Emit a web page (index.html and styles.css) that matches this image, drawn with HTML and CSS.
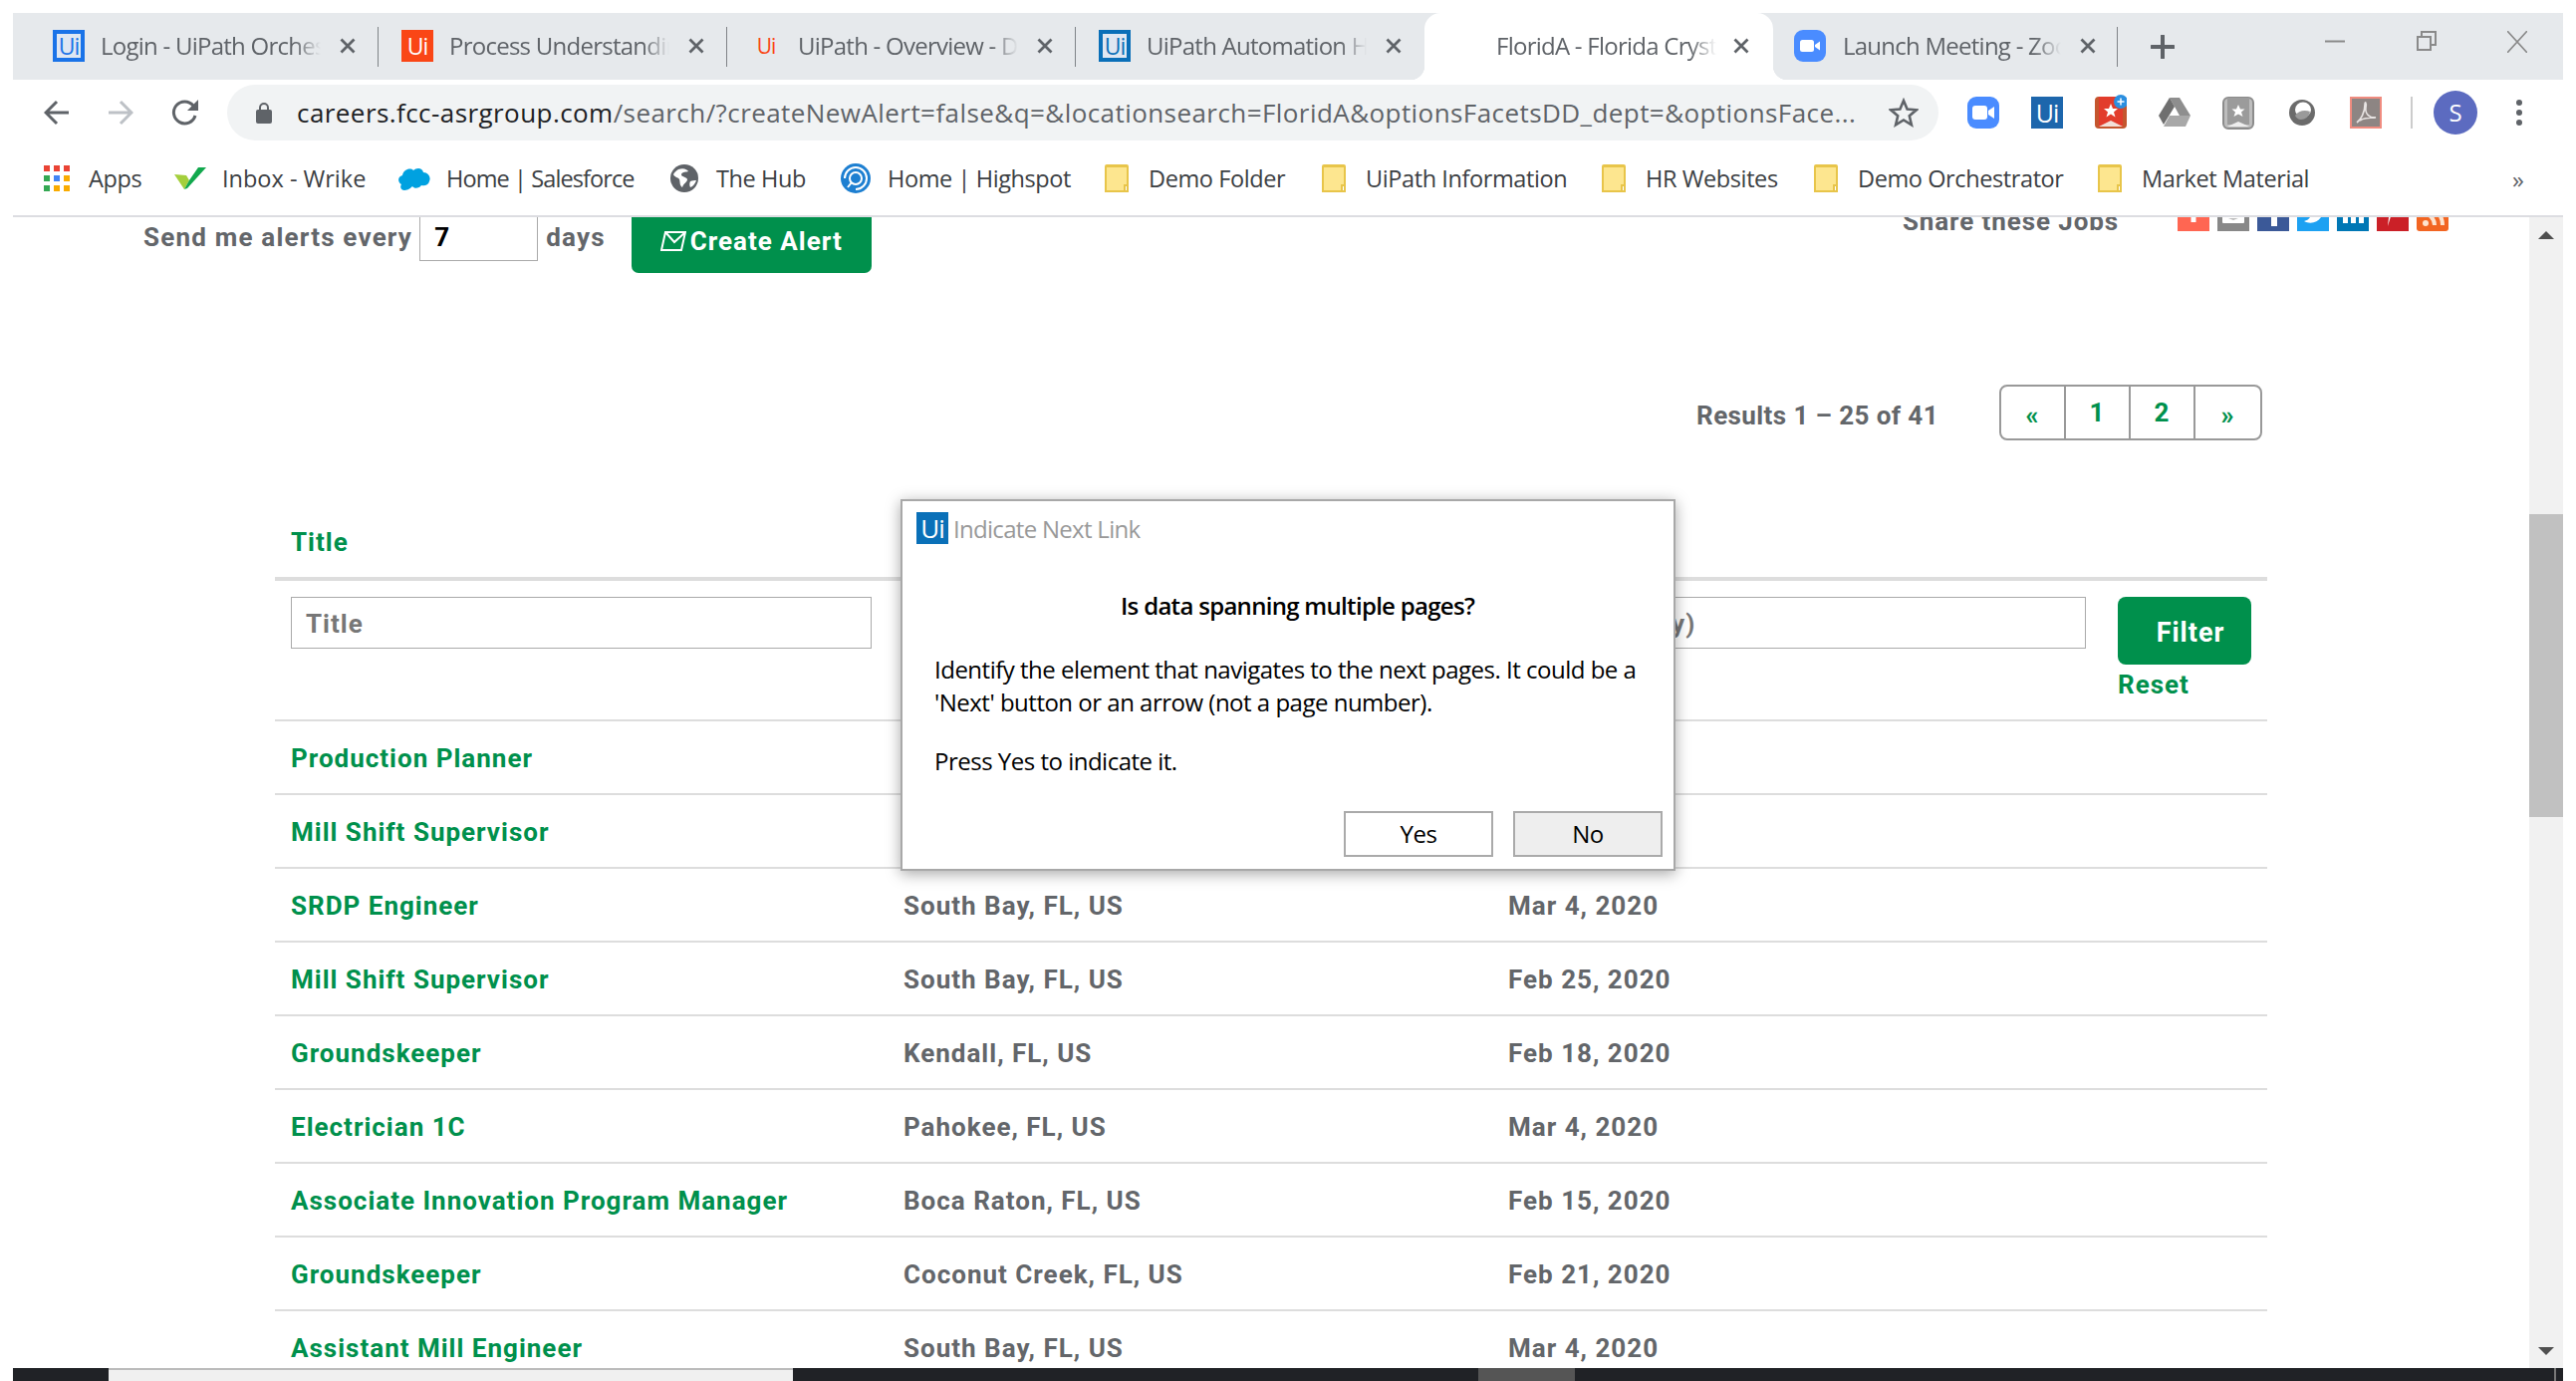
FILE: index.html
```html
<!DOCTYPE html>
<html lang="en">
  <head>
    <meta charset="UTF-8" />
    <title>FloridA - Florida Crystals</title>
    <link rel="stylesheet" href="styles.css">
  </head>
  <body>
    <div class="browser">
      <!-- Tab strip -->
      <div class="tabstrip">
        <div class="tab">
          <span class="fav fav-outline">Ui</span>
          <span class="tab-title">Login - UiPath Orchestrator</span>
          <svg class="tab-close" viewBox="0 0 16 16" width="16" height="16"><path d="M1.500 1.500l13 13M14.500 1.500l-13 13" stroke="#5f6368" stroke-width="2.800"/></svg>
        </div>
        <div class="tab">
          <span class="fav fav-orange">Ui</span>
          <span class="tab-title">Process Understanding</span>
          <svg class="tab-close" viewBox="0 0 16 16" width="16" height="16"><path d="M1.500 1.500l13 13M14.500 1.500l-13 13" stroke="#5f6368" stroke-width="2.800"/></svg>
        </div>
        <div class="tab">
          <span class="fav fav-plain">Ui</span>
          <span class="tab-title">UiPath - Overview - Docs</span>
          <svg class="tab-close" viewBox="0 0 16 16" width="16" height="16"><path d="M1.500 1.500l13 13M14.500 1.500l-13 13" stroke="#5f6368" stroke-width="2.800"/></svg>
        </div>
        <div class="tab tab-before-active">
          <span class="fav fav-outline-dark">Ui</span>
          <span class="tab-title">UiPath Automation Hub</span>
          <svg class="tab-close" viewBox="0 0 16 16" width="16" height="16"><path d="M1.500 1.500l13 13M14.500 1.500l-13 13" stroke="#5f6368" stroke-width="2.800"/></svg>
        </div>
        <div class="tab tab-active">
          <span class="fav fav-none"></span>
          <span class="tab-title">FloridA - Florida Crystals</span>
          <svg class="tab-close" viewBox="0 0 16 16" width="16" height="16"><path d="M1.500 1.500l13 13M14.500 1.500l-13 13" stroke="#5f6368" stroke-width="2.800"/></svg>
        </div>
        <div class="tab tab-last">
          <span class="fav fav-zoom">
            <svg viewBox="0 0 32 32" width="32" height="32"><rect x="6" y="10" width="14" height="12" rx="2.500" fill="#fff"/><path d="M21 15l5-3.500v9L21 17z" fill="#fff"/></svg>
          </span>
          <span class="tab-title">Launch Meeting - Zoom</span>
          <svg class="tab-close" viewBox="0 0 16 16" width="16" height="16"><path d="M1.500 1.500l13 13M14.500 1.500l-13 13" stroke="#5f6368" stroke-width="2.800"/></svg>
        </div>
        <span class="new-tab">
          <svg viewBox="0 0 24 24" width="24" height="24"><path d="M12 1v22M1 12h22" stroke="#5f6368" stroke-width="4" stroke-linecap="round"/></svg>
        </span>
        <div class="win-controls">
          <svg viewBox="0 0 20 22" width="20" height="22"><path d="M0 10.500h20" stroke="#8a8a8a" stroke-width="2"/></svg>
          <svg viewBox="0 0 20 20" width="20" height="20"><path d="M1 6h13v13H1zM5 6V1h14v13h-5" fill="none" stroke="#8a8a8a" stroke-width="2"/></svg>
          <svg viewBox="0 0 20 22" width="20" height="22"><path d="M0 0l20 22M20 0L0 22" stroke="#8a8a8a" stroke-width="1.600"/></svg>
        </div>
      </div>

      <!-- Address row -->
      <div class="toolbar">
        <svg class="nav-icon" viewBox="0 0 26 26" width="26" height="26"><path d="M25 13H3M13 2L2 13l11 11" fill="none" stroke="#5f6368" stroke-width="3"/></svg>
        <svg class="nav-icon" viewBox="0 0 26 26" width="26" height="26"><path d="M1 13h22M13 2l11 11-11 11" fill="none" stroke="#bdc1c6" stroke-width="3"/></svg>
        <svg class="nav-icon" viewBox="0 0 28 28" width="28" height="28"><path d="M24 17a11 11 0 1 1-2-10" fill="none" stroke="#5f6368" stroke-width="3"/><path d="M27 1v11H16z" fill="#5f6368"/></svg>
        <div class="omnibox">
          <svg class="lock" viewBox="0 0 16 22" width="16" height="22"><path d="M4 9V6a4 4 0 0 1 8 0v3" fill="none" stroke="#5f6368" stroke-width="2"/><rect y="8" width="16" height="14" rx="2" fill="#5f6368"/></svg>
          <span class="url"><b>careers.fcc-asrgroup.com</b>/search/?createNewAlert=false&amp;q=&amp;locationsearch=FloridA&amp;optionsFacetsDD_dept=&amp;optionsFace...</span>
          <svg class="star" viewBox="0 0 30 30" width="30" height="30"><path d="M15 3l3.600 8.500 9.200.8-7 6 2.100 9L15 22.500 7.100 27.300l2.100-9-7-6 9.200-.8z" fill="none" stroke="#5f6368" stroke-width="2.600"/></svg>
        </div>
        <div class="extensions">
          <svg viewBox="0 0 32 38" width="32" height="38"><rect y="3" width="32" height="32" rx="9" fill="#4a8cff"/><rect x="5" y="12" width="15" height="14" rx="3" fill="#fff"/><path d="M21 17l6-4v12l-6-4z" fill="#fff"/></svg>
          <span class="ext-ui">Ui</span>
          <svg viewBox="0 0 32 38" width="32" height="38"><rect y="3" width="32" height="32" rx="4" fill="#c4562e"/><rect x="4" y="3" width="24" height="30" fill="#e23c2c"/><path d="M4 33l12-6 12 6z" fill="#f3e0d8"/><path d="M16 10l2 5h5l-4 3.500 1.500 5L16 20.500 11.500 23.500l1.500-5-4-3.500h5z" fill="#fff"/><circle cx="26" cy="8" r="7" fill="#2b8fe0"/><path d="M26 4.500v7M22.500 8h7" stroke="#fff" stroke-width="1.500"/></svg>
          <svg viewBox="0 0 32 38" width="32" height="38"><path d="M11 4h10l11 18H21z" fill="#8e8e8e"/><path d="M11 4L0 22l5 9 11-18z" fill="#6f6f6f"/><path d="M5 33h22l5-11H11z" fill="#a8a8a8"/></svg>
          <svg viewBox="0 0 32 38" width="32" height="38"><rect x="1" y="4" width="30" height="31" rx="5" fill="#bdbdbd" stroke="#8c8c8c" stroke-width="2"/><rect x="5" y="4" width="22" height="27" fill="#9b9b9b"/><path d="M5 33l11-5 11 5z" fill="#eee"/><path d="M16 11l2 4.500h4.500L19 18.500l1.500 4.500L16 20.500 11.500 23l1.500-4.500-3.500-3H14z" fill="#fff"/></svg>
          <svg viewBox="0 0 32 38" width="32" height="38"><circle cx="16" cy="19" r="13" fill="#6b6b6b"/><ellipse cx="17" cy="16" rx="8" ry="7.500" fill="#fff"/><path d="M9 22c3-5 10-6 15-4-1 5-5 8-9 8-3 0-5-2-6-4z" fill="#9a9a9a"/></svg>
          <svg viewBox="0 0 32 38" width="32" height="38"><rect x="1" y="4" width="30" height="30" fill="#8d8583" stroke="#f08c80" stroke-width="2"/><path d="M7 29c4-3 8-10 8-18 0-4 2-2 1 3-1 6 4 11 10 10-5 0-12 0-16 3" fill="none" stroke="#e8e4e3" stroke-width="1.600"/></svg>
          <span class="ext-sep"></span>
          <span class="avatar">S</span>
          <span class="menu-dots"><i></i><i></i><i></i></span>
        </div>
      </div>

      <!-- Bookmarks -->
      <div class="bookmarks">
        <div class="bm bm-apps">
          <svg viewBox="0 0 26 26" width="26" height="26"><rect width="6" height="6" fill="#ea4335"/><rect x="10" width="6" height="6" fill="#ea4335"/><rect x="20" width="6" height="6" fill="#ea4335"/><rect y="10" width="6" height="6" fill="#34a853"/><rect x="10" y="10" width="6" height="6" fill="#4285f4"/><rect x="20" y="10" width="6" height="6" fill="#f9ab00"/><rect y="20" width="6" height="6" fill="#34a853"/><rect x="10" y="20" width="6" height="6" fill="#f9ab00"/><rect x="20" y="20" width="6" height="6" fill="#f9ab00"/></svg>
          <span>Apps</span>
        </div>
        <div class="bm bm-wrike">
          <svg viewBox="0 0 32 26" width="32" height="26"><path d="M0 9l12 1 3 5-5 9z" fill="#a4cf3c"/><path d="M15 15l9-13h8L13 23l-3 1z" fill="#11a84d"/></svg>
          <span>Inbox - Wrike</span>
        </div>
        <div class="bm bm-sales">
          <svg viewBox="0 0 33 26" width="33" height="26"><path d="M7 25c-3 0-5-3-3-6-4-2-4-8 1-9 1-6 8-8 11-5 3-3 9-3 10 2 5 0 8 5 6 9-1 4-5 5-8 4-2 3-7 4-9 1-3 3-6 4-8 4z" fill="#00a1e0"/></svg>
          <span>Home | Salesforce</span>
        </div>
        <div class="bm bm-hub">
          <svg viewBox="0 0 28 28" width="28" height="28"><circle cx="14" cy="14" r="14" fill="#5f6368"/><path d="M8 5c5-2 9 0 10 2-2 1-6 0-7 3 0 3 5 2 6 5 0 3-4 4-5 8-3-2-2-5-3-8-1-2-5-2-6-5 1-2 3-4 5-5zM20 17c2-1 4-1 6-1-1 3-3 6-6 7-1-2-1-4 0-6z" fill="#fff"/></svg>
          <span>The Hub</span>
        </div>
        <div class="bm bm-spot">
          <svg viewBox="0 0 30 30" width="30" height="30"><circle cx="15" cy="15" r="15" fill="#1d7fd1"/><path d="M15 26a11 11 0 1 0-11-11" fill="none" stroke="#fff" stroke-width="2"/><circle cx="15" cy="15" r="6" fill="none" stroke="#fff" stroke-width="2"/><path d="M7 24l4-5" stroke="#fff" stroke-width="2"/></svg>
          <span>Home | Highspot</span>
        </div>
        <div class="bm bm-folder bm-f1"><span class="folder"></span><span>Demo Folder</span></div>
        <div class="bm bm-folder bm-f2"><span class="folder"></span><span>UiPath Information</span></div>
        <div class="bm bm-folder bm-f3"><span class="folder"></span><span>HR Websites</span></div>
        <div class="bm bm-folder bm-f4"><span class="folder"></span><span>Demo Orchestrator</span></div>
        <div class="bm bm-folder"><span class="folder"></span><span>Market Material</span></div>
        <span class="bm-more">&raquo;</span>
      </div>

      <!-- Page -->
      <div class="viewport">
        <main class="page">
          <div class="alert-row">
            <div class="alert-form">
              <span class="alert-label">Send me alerts every</span>
              <span class="days-input">7</span>
              <span class="alert-label">days</span>
              <span class="create-alert">
                <svg viewBox="0 0 26 22" width="26" height="22"><path d="M5 2h20l-4 18H1zM5 2l9 10L25 2" fill="none" stroke="#fff" stroke-width="2"/></svg>
                Create Alert
              </span>
            </div>
            <div class="share">
              <span class="share-label">Share these Jobs</span>
              <div class="share-icons">
                <svg viewBox="0 0 32 32" width="32" height="32"><rect width="32" height="32" fill="#ff6652"/><rect x="13.500" width="5" height="23" fill="#fff"/></svg>
                <svg viewBox="0 0 32 32" width="32" height="32"><rect width="32" height="32" fill="#888"/><rect x="5" width="22" height="24" rx="1" fill="#fff"/><path d="M11 19h10l-5 2z" fill="#bbb"/></svg>
                <svg viewBox="0 0 32 32" width="32" height="32"><rect width="32" height="32" fill="#3b5998"/><rect x="14" width="6" height="27" fill="#fff"/></svg>
                <svg viewBox="0 0 32 32" width="32" height="32"><rect width="32" height="32" fill="#1da1f2"/><path d="M7 22c7 4 17 1 19-9l-19 2c3 1 5 2 6 3-1 2-3 3-6 4z" fill="#fff"/></svg>
                <svg viewBox="0 0 32 32" width="32" height="32"><rect width="32" height="32" fill="#0077b5"/><path d="M6 0h5v24H6zM14 0h5v24h-5zM22 0h5v24h-5z" fill="#fff"/></svg>
                <svg viewBox="0 0 32 32" width="32" height="32"><rect width="32" height="32" fill="#cb2027"/><path d="M16 0h8c-1 8-5 15-9 14l-4 13 1-9 3-12z" fill="#fff"/></svg>
                <svg viewBox="0 0 32 32" width="32" height="32"><rect width="32" height="32" rx="3" fill="#f26522"/><circle cx="9" cy="24" r="3" fill="#fde3cf"/><path d="M6 14a12 12 0 0 1 12 12M6 6a20 20 0 0 1 20 20" fill="none" stroke="#fde3cf" stroke-width="4"/></svg>
              </div>
            </div>
          </div>

          <div class="results-row">
            <span class="results-count">Results 1 &ndash; 25 of 41</span>
            <div class="pager">
              <a class="pager-arrow">&laquo;</a>
              <a>1</a>
              <a>2</a>
              <a class="pager-arrow">&raquo;</a>
            </div>
          </div>

          <section class="jobs">
            <div class="jobs-head">Title</div>
            <div class="filters">
              <input class="f-title" placeholder="Title" />
              <input class="f-location" placeholder="Location" />
              <input class="f-date" placeholder="Date (mm/dd/yyyy)" />
              <div class="filter-actions">
                <span class="filter-btn">Filter</span>
                <a class="reset">Reset</a>
              </div>
            </div>
            <div class="job"><a>Production Planner</a><span>South Bay, FL, US</span><span>Mar 4, 2020</span></div>
            <div class="job"><a>Mill Shift Supervisor</a><span>South Bay, FL, US</span><span>Mar 4, 2020</span></div>
            <div class="job"><a>SRDP Engineer</a><span>South Bay, FL, US</span><span>Mar 4, 2020</span></div>
            <div class="job"><a>Mill Shift Supervisor</a><span>South Bay, FL, US</span><span>Feb 25, 2020</span></div>
            <div class="job"><a>Groundskeeper</a><span>Kendall, FL, US</span><span>Feb 18, 2020</span></div>
            <div class="job"><a>Electrician 1C</a><span>Pahokee, FL, US</span><span>Mar 4, 2020</span></div>
            <div class="job"><a>Associate Innovation Program Manager</a><span>Boca Raton, FL, US</span><span>Feb 15, 2020</span></div>
            <div class="job"><a>Groundskeeper</a><span>Coconut Creek, FL, US</span><span>Feb 21, 2020</span></div>
            <div class="job"><a>Assistant Mill Engineer</a><span>South Bay, FL, US</span><span>Mar 4, 2020</span></div>
          </section>
        </main>
        <div class="scrollbar">
          <span class="arrow-up"></span>
          <span class="thumb"></span>
          <span class="arrow-down"></span>
        </div>

        <!-- Indicate Next Link dialog -->
        <div class="dialog">
          <div class="dialog-title">
            <span class="dialog-logo">Ui</span>
            <span>Indicate Next Link</span>
          </div>
          <h2>Is data spanning multiple pages?</h2>
          <p>Identify the element that navigates to the next pages. It could be a<br />'Next' button or an arrow (not a page number).</p>
          <p>Press Yes to indicate it.</p>
          <div class="dialog-buttons">
            <button>Yes</button>
            <button class="btn-no">No</button>
          </div>
        </div>
      </div>

      <!-- Taskbar sliver -->
      <div class="taskbar">
        <span class="task-light"></span>
        <span class="task-mid"></span>
        <span class="task-line"></span>
      </div>
    </div>
  </body>
</html>
```

FILE: styles.css
```css
html,
body {
  margin: 0;
  height: 100%;
  background: #fff;
  overflow: hidden;
}
body {
  font-family: "Open Sans", sans-serif;
}
.browser {
  width: 2560px;
  height: 1386px;
  margin-left: 13px;
  display: flex;
  flex-direction: column;
  box-sizing: border-box;
  padding-top: 13px;
}

/* Tabs */
.tabstrip {
  height: 67px;
  background: #e6e9ec;
  display: flex;
  align-items: stretch;
  padding-left: 17px;
  flex: none;
}
.tab {
  width: 350px;
  box-sizing: border-box;
  display: flex;
  align-items: center;
  padding-left: 23px;
  position: relative;
  padding-bottom: 2px;
}
.tab::after {
  content: "";
  position: absolute;
  right: 0;
  top: 14px;
  height: 40px;
  width: 1px;
  background: #7f8387;
}
.tab-before-active::after {
  display: none;
}
.tab-active {
  background: #fff;
  border-radius: 16px 16px 0 0;
}
.tab-active::before,
.tab-active::after {
  content: "";
  position: absolute;
  top: auto;
  bottom: 0;
  width: 14px;
  height: 14px;
  background: radial-gradient(circle at 0 0, transparent 14px, #fff 14.500px);
}
.tab-active::before {
  left: -14px;
}
.tab-active::after {
  right: -14px;
  background: radial-gradient(circle at 100% 0, transparent 14px, #fff 14.500px);
}
.fav {
  width: 32px;
  height: 32px;
  flex: none;
  box-sizing: border-box;
  display: flex;
  align-items: center;
  justify-content: center;
  font-size: 23px;
  letter-spacing: -1px;
  margin-right: 16px;
}
.fav-outline {
  border: 4px solid #1a73e8;
  background: #dfe7f2;
  color: #1a73e8;
}
.fav-outline-dark {
  border: 4px solid #0a6fb8;
  background: #dfe7f2;
  color: #0a6fb8;
}
.fav-orange {
  background: #fa4616;
  color: #fff;
}
.fav-plain {
  color: #fa4616;
  font-size: 21px;
}
.fav-none {
  margin-right: 17px;
}
.fav-zoom {
  background: #4a8cff;
  border-radius: 9px;
  margin-right: 17px;
}
.tab-last {
  padding-left: 21px;
  width: 346px;
}
.tab-title {
  width: 221px;
  flex: none;
  overflow: hidden;
  white-space: nowrap;
  font-size: 24px;
  letter-spacing: -0.750px;
  color: #5f6368;
  -webkit-mask-image: linear-gradient(to right, #000 88%, transparent 100%);
  mask-image: linear-gradient(to right, #000 88%, transparent 100%);
}
.tab-close {
  flex: none;
  margin-left: 19px;
}
.tab-active .tab-close {
  margin-left: 17px;
}
.tab-last .tab-title {
  width: 219px;
}
.new-tab {
  width: 24px;
  margin-left: 33px;
  display: flex;
  align-items: center;
}
.win-controls {
  margin-left: auto;
  width: 203px;
  margin-right: 36px;
  display: flex;
  justify-content: space-between;
  padding-top: 18px;
  align-items: flex-start;
}

/* Address row */
.toolbar {
  height: 66px;
  display: flex;
  align-items: center;
  flex: none;
  padding-left: 31px;
}
.nav-icon {
  margin-right: 38px;
  flex: none;
}
.nav-icon:nth-child(3) {
  margin-right: 28px;
}
.omnibox {
  width: 1718px;
  height: 56px;
  background: #f1f3f4;
  border-radius: 28px;
  display: flex;
  align-items: center;
  box-sizing: border-box;
  padding-left: 29px;
  flex: none;
}
.lock {
  flex: none;
  margin-right: 25px;
}
.url {
  width: 1566px;
  flex: none;
  white-space: nowrap;
  overflow: hidden;
  font-size: 26px;
  letter-spacing: 0.430px;
  color: #5f6368;
}
.url b {
  font-weight: 400;
  color: #202124;
}
.star {
  flex: none;
  margin-left: 32px;
}
.extensions {
  display: flex;
  align-items: center;
  margin-left: 29px;
}
.extensions svg {
  margin-right: 32px;
  flex: none;
}
.ext-ui {
  width: 32px;
  height: 32px;
  background: #1d66ac;
  color: #fff;
  font-size: 25px;
  line-height: 32px;
  text-align: center;
  margin-right: 32px;
  flex: none;
  letter-spacing: -1px;
}
.ext-sep {
  width: 2px;
  height: 32px;
  background: #ccc;
  margin-left: -3px;
  margin-right: 21px;
}
.avatar {
  width: 44px;
  height: 44px;
  border-radius: 50%;
  background: #5c6bc0;
  color: #fff;
  font-size: 24px;
  line-height: 44px;
  text-align: center;
  flex: none;
}
.menu-dots {
  display: flex;
  flex-direction: column;
  gap: 4px;
  margin-left: 39px;
}
.menu-dots i {
  width: 6px;
  height: 6px;
  border-radius: 50%;
  background: #5f6368;
}

/* Bookmarks */
.bookmarks {
  height: 72px;
  box-sizing: border-box;
  border-bottom: 2px solid #dcdde1;
  display: flex;
  align-items: center;
  padding-left: 31px;
  flex: none;
  padding-bottom: 4px;
}
.bm {
  display: flex;
  align-items: center;
  gap: 16px;
  font-size: 23.500px;
  letter-spacing: -0.400px;
  color: #3c4043;
  white-space: nowrap;
  flex: none;
}
.bm-apps { width: 131px; gap: 19px; }
.bm-wrike { width: 224px; letter-spacing: 0; }
.bm-sales { width: 274px; letter-spacing: -0.900px; }
.bm-hub { width: 171px; gap: 18px; }
.bm-spot { width: 265px; gap: 17px; }
.bm-folder { gap: 20px; }
.bm-f1 { width: 218px; }
.bm-f2 { width: 281px; }
.bm-f3 { width: 213px; }
.bm-f4 { width: 285px; }
.folder {
  width: 24px;
  height: 28px;
  box-sizing: border-box;
  background: #fde68f;
  border: 2px solid #e8c54a;
  border-top-width: 3px;
  border-radius: 2px 2px 0 0;
  position: relative;
}
.folder::after {
  content: "";
  position: absolute;
  right: -2px;
  bottom: -2px;
  width: 5px;
  height: 8px;
  border: 2px solid #e8c54a;
  background: #fff;
  box-sizing: border-box;
}
.bm-more {
  margin-left: auto;
  margin-right: 39px;
  font-size: 24px;
  color: #5f6368;
}

/* Page area */
.viewport {
  flex: 1;
  min-height: 0;
  position: relative;
  display: flex;
  overflow: hidden;
}
.page {
  flex: 1;
  min-width: 0;
  overflow: hidden;
  padding-left: 263px;
  padding-right: 263px;
  font-family: Roboto, sans-serif;
  font-weight: 700;
  font-size: 26px;
  letter-spacing: 1px;
  color: #63666a;
}
.alert-row {
  margin-left: -132px;
  margin-right: -182px;
  margin-top: -19px;
  height: 75px;
  display: flex;
  justify-content: space-between;
}
.alert-form {
  display: flex;
  align-items: flex-start;
}
.alert-label {
  padding-top: 24px;
  letter-spacing: 1.200px;
}
.days-input {
  width: 119px;
  height: 63px;
  margin-left: 7px;
  margin-right: 8px;
  box-sizing: border-box;
  border: 1px solid #aaa;
  color: #000;
  padding: 23px 0 0 14px;
}
.create-alert {
  margin-left: 26px;
  width: 241px;
  height: 75px;
  background: #00904c;
  color: #fff;
  border-radius: 0 0 7px 7px;
  display: flex;
  align-items: center;
  justify-content: center;
  gap: 4px;
  padding-top: 11px;
  box-sizing: border-box;
}
.share {
  display: flex;
  align-items: flex-start;
}
.share-label {
  padding-top: 8px;
  margin-right: 59px;
  letter-spacing: 0.900px;
}
.share-icons {
  display: flex;
  gap: 8px;
  padding-top: 1px;
}

.results-row {
  height: 56px;
  margin-top: 112px;
  margin-right: 5px;
  display: flex;
  justify-content: flex-end;
  align-items: center;
}
.results-count {
  margin-right: 61px;
  padding-top: 6px;
  letter-spacing: 0.400px;
}
.pager {
  display: flex;
  height: 56px;
  box-sizing: border-box;
  border: 2px solid #999;
  border-radius: 8px;
}
.pager a {
  width: 65px;
  box-sizing: border-box;
  border-right: 2px solid #999;
  color: #00904c;
  display: flex;
  align-items: center;
  justify-content: center;
}
.pager a:last-child {
  border-right: 0;
}
.pager-arrow {
  width: 66px;
  padding-top: 6px;
}
.jobs-head {
  height: 82px;
  margin-top: 55px;
  box-sizing: border-box;
  padding: 32px 0 0 16px;
  color: #00904c;
}
.filters {
  height: 145px;
  box-sizing: border-box;
  border-top: 4px solid #ddd;
  border-bottom: 2px solid #ddd;
  display: flex;
  align-items: flex-start;
  padding: 16px 0 0 16px;
}
.filters input {
  height: 52px;
  box-sizing: border-box;
  border: 1px solid #aaa;
  padding: 2px 0 0 14px;
  font: inherit;
  letter-spacing: inherit;
  color: inherit;
  outline: 0;
}
.filters input::placeholder {
  color: #777;
  opacity: 1;
}
.f-title {
  width: 583px;
  margin-right: 31px;
}
.f-location {
  width: 510px;
  margin-right: 19px;
}
.filters .f-date {
  width: 659px;
  margin-right: 32px;
  padding-left: 25px;
}
.filter-actions {
  display: flex;
  flex-direction: column;
}
.filter-btn {
  width: 134px;
  height: 68px;
  background: #00904c;
  color: #fff;
  border-radius: 8px;
  font-size: 27px;
  display: flex;
  align-items: center;
  justify-content: center;
  padding: 4px 0 0 12px;
  box-sizing: border-box;
}
.reset {
  color: #00904c;
  margin-top: 5px;
}
.job {
  height: 74px;
  box-sizing: border-box;
  border-bottom: 2px solid #ddd;
  display: grid;
  grid-template-columns: 615px 607px 1fr;
  padding: 2px 0 0 16px;
  align-items: center;
}
.job a {
  color: #00904c;
}

/* Scrollbar */
.scrollbar {
  width: 34px;
  flex: none;
  background: #f1f1f1;
  position: relative;
}
.arrow-up,
.arrow-down {
  position: absolute;
  left: 9px;
  width: 0;
  height: 0;
  border-left: 8px solid transparent;
  border-right: 8px solid transparent;
}
.arrow-up {
  top: 14px;
  border-bottom: 8px solid #505050;
}
.arrow-down {
  bottom: 13px;
  border-top: 8px solid #505050;
}
.thumb {
  position: absolute;
  left: 0;
  right: 0;
  top: 298px;
  height: 304px;
  background: #c1c1c1;
}

/* Dialog */
.dialog {
  position: absolute;
  left: 891px;
  top: 283px;
  width: 778px;
  height: 373px;
  box-sizing: border-box;
  background: #fff;
  border: 2px solid #a8a8a8;
  box-shadow: 0 3px 14px rgba(0, 0, 0, 0.35);
  font-size: 24px;
  color: #000;
  padding: 0 0 0 32px;
  letter-spacing: -0.500px;
}
.dialog-title {
  display: flex;
  align-items: center;
  gap: 5px;
  margin: 11px 0 0 -18px;
  height: 32px;
  color: #999;
  letter-spacing: -0.700px;
}
.dialog-logo {
  width: 32px;
  height: 32px;
  background: #0a70b8;
  color: #fff;
  text-align: center;
  line-height: 32px;
  font-size: 26px;
  letter-spacing: -1px;
}
.dialog h2 {
  margin: 45px 0 0 187px;
  font-size: 24px;
  font-weight: 600;
  line-height: 33px;
  letter-spacing: -0.700px;
}
.dialog p {
  margin: 31px 0 0;
  line-height: 33px;
}
.dialog p + p {
  margin-top: 26px;
}
.dialog-buttons {
  display: flex;
  gap: 20px;
  margin: 34px 0 0 411px;
}
.dialog button {
  width: 150px;
  height: 46px;
  box-sizing: border-box;
  background: #fff;
  border: 2px solid #aaa;
  font: inherit;
  letter-spacing: inherit;
  color: #000;
  padding: 0 0 2px;
}
.dialog .btn-no {
  background: #eee;
}

/* Taskbar */
.taskbar {
  height: 13px;
  flex: none;
  background: #202226;
  display: flex;
}
.task-light {
  width: 687px;
  margin-left: 96px;
  box-sizing: border-box;
  background: #f0f0f0;
  border-top: 2px solid #bbb;
}
.task-mid {
  width: 97px;
  margin-left: 688px;
  background: #555;
}
.task-line {
  width: 2px;
  margin-left: auto;
  margin-right: 7px;
  background: #777;
}
```
